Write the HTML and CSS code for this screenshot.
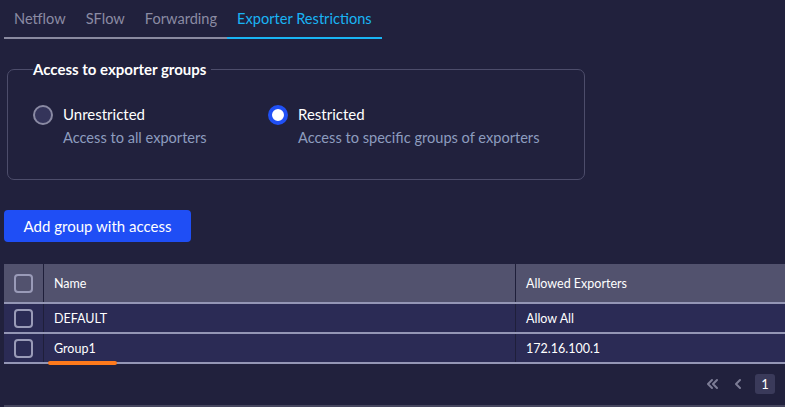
FILE: index.html
```html
<!DOCTYPE html>
<html>
<head>
<meta charset="utf-8">
<link rel="stylesheet" href="styles.css">
</head>
<body>
<div class="page">
  <nav class="tabs">
    <div class="tab">Netflow</div>
    <div class="tab">SFlow</div>
    <div class="tab">Forwarding</div>
    <div class="tab active">Exporter Restrictions</div>
  </nav>

  <fieldset class="group">
    <legend>Access to exporter groups</legend>
    <div class="options">
      <label class="option">
        <span class="radio"></span>
        <span class="opt-text">
          <span class="opt-title">Unrestricted</span>
          <span class="opt-sub">Access to all exporters</span>
        </span>
      </label>
      <label class="option">
        <span class="radio checked"></span>
        <span class="opt-text">
          <span class="opt-title">Restricted</span>
          <span class="opt-sub">Access to specific groups of exporters</span>
        </span>
      </label>
    </div>
  </fieldset>

  <button class="btn">Add group with access</button>

  <div class="table">
    <div class="row head">
      <div class="cell chk"><span class="box"></span></div>
      <div class="cell name">Name</div>
      <div class="cell allowed">Allowed Exporters</div>
    </div>
    <div class="row">
      <div class="cell chk"><span class="box"></span></div>
      <div class="cell name">DEFAULT</div>
      <div class="cell allowed">Allow All</div>
    </div>
    <div class="row">
      <div class="cell chk"><span class="box"></span></div>
      <div class="cell name"><span class="mark">Group1</span></div>
      <div class="cell allowed">172.16.100.1</div>
    </div>
  </div>

  <div class="pager">
    <svg class="pg-icon" width="16" height="12" viewBox="0 0 16 12"><path d="M7 2 L3 6 L7 10 M12 2 L8 6 L12 10" fill="none" stroke="#7d7d96" stroke-width="2" stroke-linecap="round" stroke-linejoin="round"/></svg>
    <svg class="pg-icon" width="10" height="12" viewBox="0 0 10 12"><path d="M7 2 L3 6 L7 10" fill="none" stroke="#7d7d96" stroke-width="2" stroke-linecap="round" stroke-linejoin="round"/></svg>
    <span class="page-num">1</span>
  </div>
  <div class="bottom-line"></div>
</div>
</body>
</html>
```

FILE: styles.css
```css
* { box-sizing: border-box; }
html, body {
  margin: 0;
  padding: 0;
  background: #21213d;
  font-family: "Lato", "Noto Sans", sans-serif;
  color: #fff;
  overflow: hidden;
}
.page {
  width: 785px;
  height: 407px;
  padding: 0 0 0 4px;
}
.tabs {
  display: flex;
  height: 39px;
  align-items: stretch;
}
.tab {
  padding: 10px 10px 0 10px;
  font-size: 14.6px;
  color: #8b8ba3;
  border-bottom: 2px solid #8a8aa0;
}
.tab.active {
  color: #19b4f4;
  border-bottom-color: #19b4f4;
}
.group {
  margin: 21px 0 0 3px;
  width: 578px;
  height: 120px;
  border: 1px solid #4d4d6b;
  border-radius: 7px;
  padding: 0 0 0 25px;
}
.group legend {
  font-weight: 700;
  font-size: 15px;
  padding: 0 5px 0 0;
  color: #fff;
}
.options {
  display: flex;
  padding-top: 26px;
}
.option {
  display: flex;
  align-items: flex-start;
  gap: 10px;
}
.option:first-child { width: 235px; }
.radio {
  width: 20px;
  height: 20px;
  border-radius: 50%;
  border: 2px solid #8a8aa3;
  background: #34345a;
  margin-top: 1px;
  flex: none;
}
.radio.checked {
  border: 4px solid #2050f5;
  background: #fff;
}
.opt-text { display: flex; flex-direction: column; }
.opt-title { font-size: 15px; color: #fff; line-height: 20px; }
.opt-sub { font-size: 14.6px; color: #8d9cbf; margin-top: 5px; }
.btn {
  display: block;
  margin-top: 30px;
  width: 187px;
  height: 32px;
  border: none;
  border-radius: 4px;
  background: #1f4ef5;
  color: #fff;
  font-family: inherit;
  font-size: 15px;
  padding: 0;
}
.table {
  margin-top: 22px;
  width: 781px;
}
.row {
  display: grid;
  grid-template-columns: 40px 472px 1fr;
  height: 30px;
  background: #2b2b55;
  border-bottom: 2px solid #9496b5;
}
.row.head {
  height: 40px;
  background: #52526e;
}
.cell {
  display: flex;
  align-items: center;
  font-size: 12.5px;
  color: #fff;
  padding-left: 10px;
}
.cell.chk {
  padding-left: 0;
  justify-content: center;
  border-right: 1px solid #1f1f3a;
}
.cell.name { border-right: 1px solid #1f1f3a; }
.box {
  width: 19px;
  height: 19px;
  border: 2px solid #9a9bb8;
  border-radius: 4px;
}
.mark {
  position: relative;
}
.mark::after {
  content: "";
  position: absolute;
  left: -6px;
  top: 20px;
  width: 69px;
  height: 4px;
  border-radius: 2px;
  background: #ff7a1c;
}
.pager {
  display: flex;
  justify-content: flex-end;
  align-items: center;
  gap: 12px;
  height: 20px;
  margin-top: 10px;
  padding-right: 10px;
}
.page-num {
  width: 20px;
  height: 20px;
  border-radius: 3px;
  background: #3a3a5a;
  font-size: 13px;
  display: flex;
  align-items: center;
  justify-content: center;
}
.bottom-line {
  margin-top: 11px;
  height: 2px;
  background: #46465f;
}
```
